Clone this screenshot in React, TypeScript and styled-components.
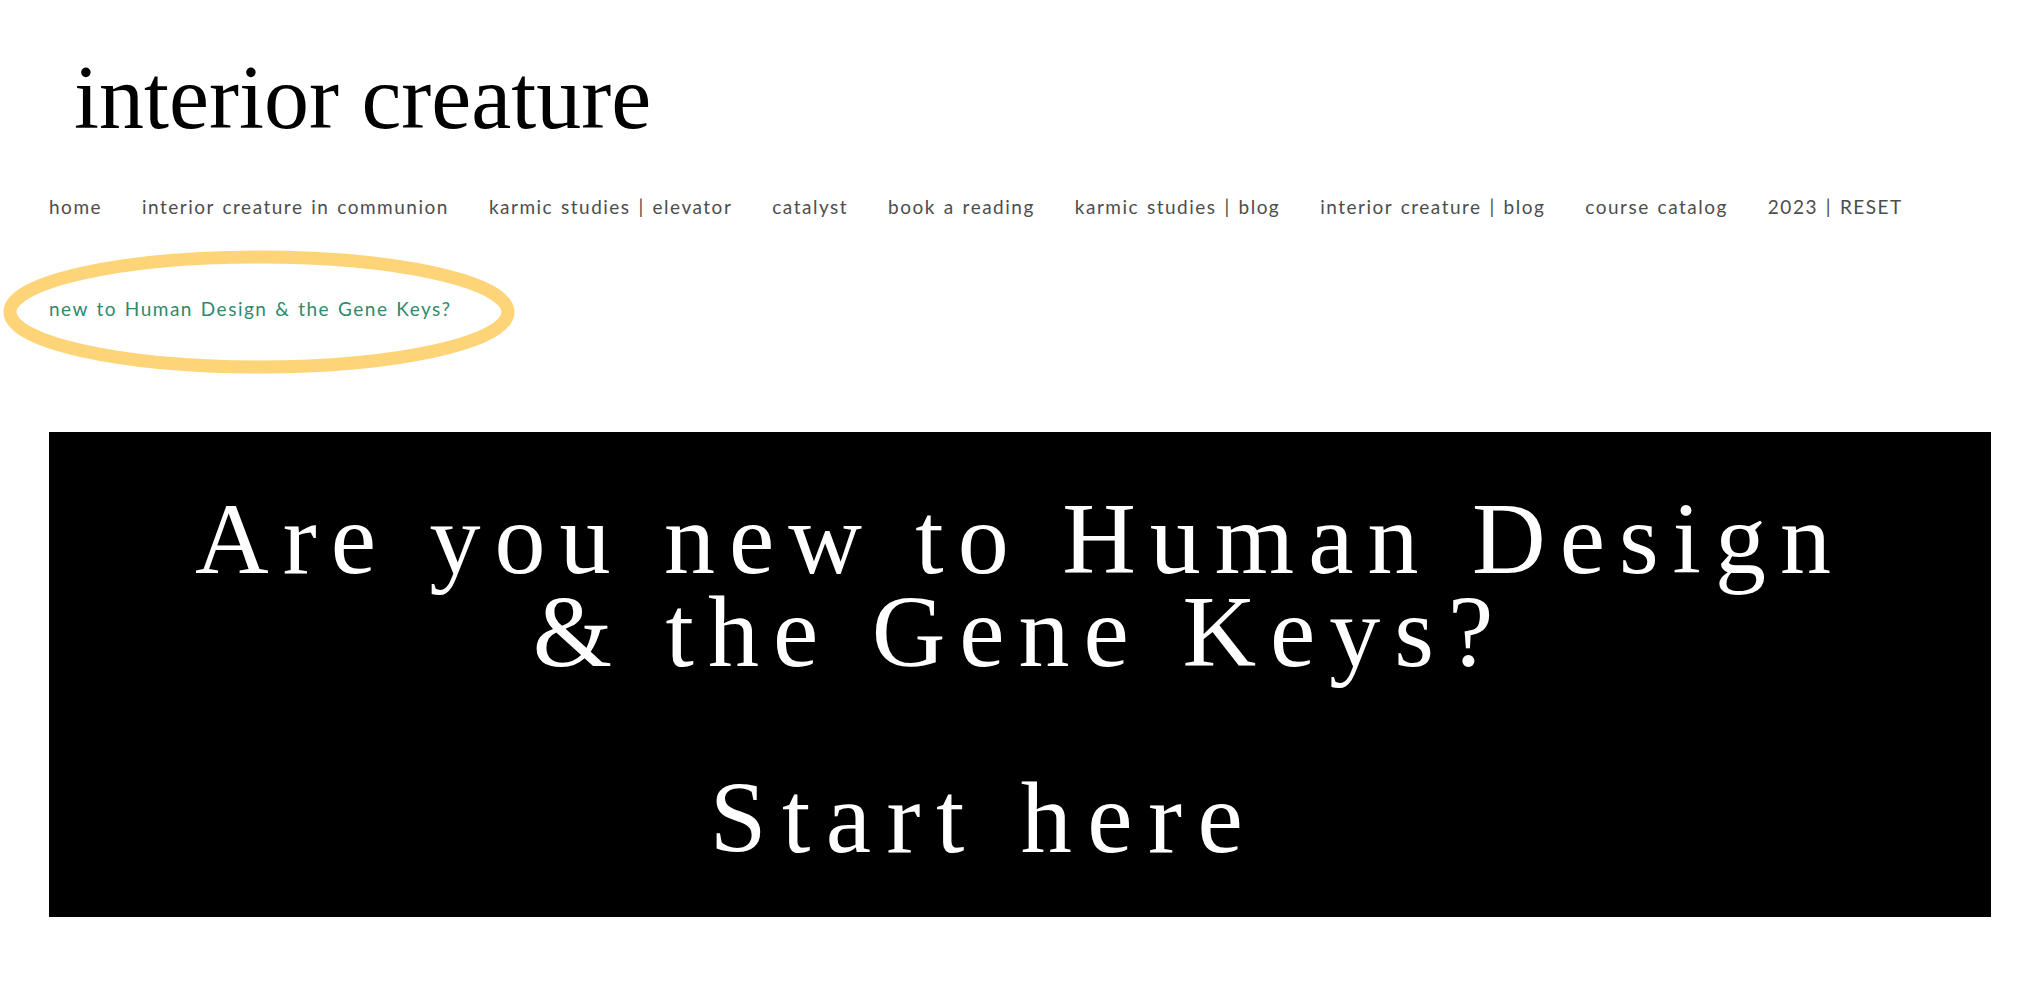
import React from "react";
import styled, { createGlobalStyle } from "styled-components";

const GlobalStyle = createGlobalStyle`
  html, body {
    margin: 0;
    padding: 0;
    background: #ffffff;
  }
  * { box-sizing: border-box; }
`;

const Page = styled.div`
  padding: 53px 51px 0 49px;
  min-height: 1006px;
  background: #ffffff;
`;

const Logo = styled.h1`
  margin: 0;
  padding-left: 25px;
  font-family: "Liberation Serif", "DejaVu Serif", serif;
  font-weight: 400;
  font-size: 90px;
  line-height: 90px;
  color: #000000;
`;

const Nav = styled.nav`
  margin-top: 49px;
  width: 1920px;
  display: flex;
  flex-wrap: wrap;
  column-gap: 40px;
  row-gap: 72px;
`;

const NavItem = styled.a<{ $accent?: boolean }>`
  position: relative;
  display: block;
  font-family: Lato, "Noto Sans", sans-serif;
  font-size: 19px;
  line-height: 30px;
  letter-spacing: 1.5px;
  word-spacing: 1.5px;
  white-space: nowrap;
  text-decoration: none;
  color: ${(p) => (p.$accent ? "#2f8a6c" : "#4d4d4d")};
`;

const Circle = styled.svg`
  position: absolute;
  left: -46px;
  top: -44px;
  width: 512px;
  height: 124px;
  overflow: visible;
  pointer-events: none;
`;

const Banner = styled.section`
  margin-top: 108px;
  height: 485px;
  background: #000000;
  padding-top: 60px;
  text-align: center;
`;

const BannerTitle = styled.h2`
  margin: 0;
  font-family: "Liberation Serif", "DejaVu Serif", serif;
  font-weight: 400;
  font-size: 102px;
  color: #ffffff;
`;

const BannerLine = styled.span<{ $shift?: number; $spacing?: number }>`
  display: block;
  height: 93px;
  line-height: 93px;
  white-space: nowrap;
  letter-spacing: ${(p) => p.$spacing ?? 14}px;
  padding-right: ${(p) => p.$shift ?? 0}px;
`;

const Spacer = styled.span`
  display: block;
  height: 93px;
`;

const links = [
  "home",
  "interior creature in communion",
  "karmic studies | elevator",
  "catalyst",
  "book a reading",
  "karmic studies | blog",
  "interior creature | blog",
  "course catalog",
  "2023 | RESET",
];

export default function App() {
  return (
    <>
      <GlobalStyle />
      <Page>
        <Logo>interior creature</Logo>
        <Nav>
          {links.map((l) => (
            <NavItem key={l} href="#">
              {l}
            </NavItem>
          ))}
          <NavItem $accent href="#">
            new to Human Design &amp; the Gene Keys?
            <Circle viewBox="0 0 512 124">
              <ellipse
                cx="256"
                cy="62"
                rx="249"
                ry="55"
                fill="none"
                stroke="#fed479"
                strokeWidth="13"
              />
            </Circle>
          </NavItem>
        </Nav>
        <Banner>
          <BannerTitle>
            <BannerLine>Are you new to Human Design</BannerLine>
            <BannerLine>&amp; the Gene Keys?</BannerLine>
            <Spacer />
            <BannerLine $spacing={15.5} $shift={72}>
              Start here
            </BannerLine>
          </BannerTitle>
        </Banner>
      </Page>
    </>
  );
}
